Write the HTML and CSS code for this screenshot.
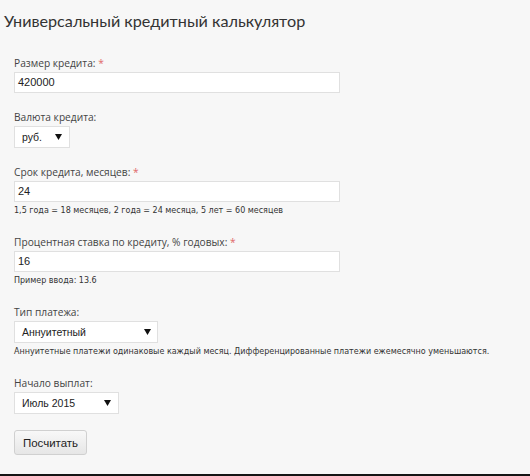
FILE: index.html
```html
<!DOCTYPE html>
<html lang="ru">
<head>
<meta charset="utf-8">
<title>Кредитный калькулятор</title>
<link rel="stylesheet" href="styles.css">
</head>
<body>
<div class="page">
  <h1 class="title">Универсальный кредитный калькулятор</h1>
  <form class="calc">
    <div class="field">
      <label class="label">Размер кредита: <span class="req">*</span></label>
      <div class="input wide">420000</div>
    </div>
    <div class="field">
      <label class="label">Валюта кредита:</label>
      <div class="select sel-cur"><span>руб.</span><svg class="arrow" width="7" height="6" viewBox="0 0 7 6"><path d="M0 0H7L3.5 6Z"/></svg></div>
    </div>
    <div class="field">
      <label class="label">Срок кредита, месяцев: <span class="req">*</span></label>
      <div class="input wide">24</div>
      <div class="hint">1,5 года = 18 месяцев, 2 года = 24 месяца, 5 лет = 60 месяцев</div>
    </div>
    <div class="field">
      <label class="label">Процентная ставка по кредиту, % годовых: <span class="req">*</span></label>
      <div class="input wide">16</div>
      <div class="hint">Пример ввода: 13.6</div>
    </div>
    <div class="field">
      <label class="label">Тип платежа:</label>
      <div class="select sel-type"><span>Аннуитетный</span><svg class="arrow" width="7" height="6" viewBox="0 0 7 6"><path d="M0 0H7L3.5 6Z"/></svg></div>
      <div class="hint">Аннуитетные платежи одинаковые каждый месяц. Дифференцированные платежи ежемесячно уменьшаются.</div>
    </div>
    <div class="field">
      <label class="label">Начало выплат:</label>
      <div class="select sel-date"><span>Июль 2015</span><svg class="arrow" width="7" height="6" viewBox="0 0 7 6"><path d="M0 0H7L3.5 6Z"/></svg></div>
    </div>
    <div class="actions">
      <button type="button" class="btn">Посчитать</button>
    </div>
  </form>
</div>
<div class="bottom-line"></div>
</body>
</html>
```

FILE: styles.css
```css
html, body {
  margin: 0;
  padding: 0;
  height: 100%;
}
body {
  background: #f7f7f7;
  display: flex;
  flex-direction: column;
  font-family: "Open Sans", "DejaVu Sans", sans-serif;
  color: #333;
}
.page {
  flex: 1;
  padding: 0 0 0 4px;
}
.title {
  margin: 0;
  padding-top: 9px;
  font-family: "Lato", "Open Sans", sans-serif;
  font-weight: 400;
  font-size: 16.2px;
  line-height: 24px;
  color: #333;
}
.calc {
  margin-top: 22px;
  padding-left: 10px;
}
.field {
  margin-bottom: 16px;
}
.label {
  display: block;
  font-size: 10.2px;
  line-height: 17px;
  color: #444;
}
.req {
  color: #e06868;
}
.input, .select {
  box-sizing: border-box;
  background: #fff;
  border: 1px solid #e0e0e0;
  font-family: "Liberation Sans", Arial, sans-serif;
  font-size: 11px;
  color: #222;
}
.input {
  width: 326px;
  height: 21px;
  line-height: 19px;
  padding-left: 3px;
}
.select {
  display: flex;
  justify-content: space-between;
  align-items: center;
  height: 22px;
  padding: 0 6px 0 7px;
  font-size: 10.5px;
}
.arrow {
  display: block;
  fill: #111;
}
.sel-cur { width: 56px; padding-right: 7px; }
.sel-type { width: 144px; }
.sel-date { width: 105px; padding-right: 7px; }
.hint {
  font-family: "DejaVu Sans", sans-serif;
  font-size: 8px;
  line-height: 16px;
  padding-top: 1px;
  margin-bottom: -1px;
  color: #333;
}
.btn {
  box-sizing: border-box;
  display: block;
  width: 73px;
  height: 25px;
  padding: 0;
  font-family: "Liberation Sans", Arial, sans-serif;
  font-size: 11.5px;
  color: #222;
  background: linear-gradient(#f8f8f8, #e6e6e6);
  border: 1px solid #d0d0d0;
  border-radius: 3px;
}
.bottom-line {
  height: 2px;
  background: #151515;
}
```
